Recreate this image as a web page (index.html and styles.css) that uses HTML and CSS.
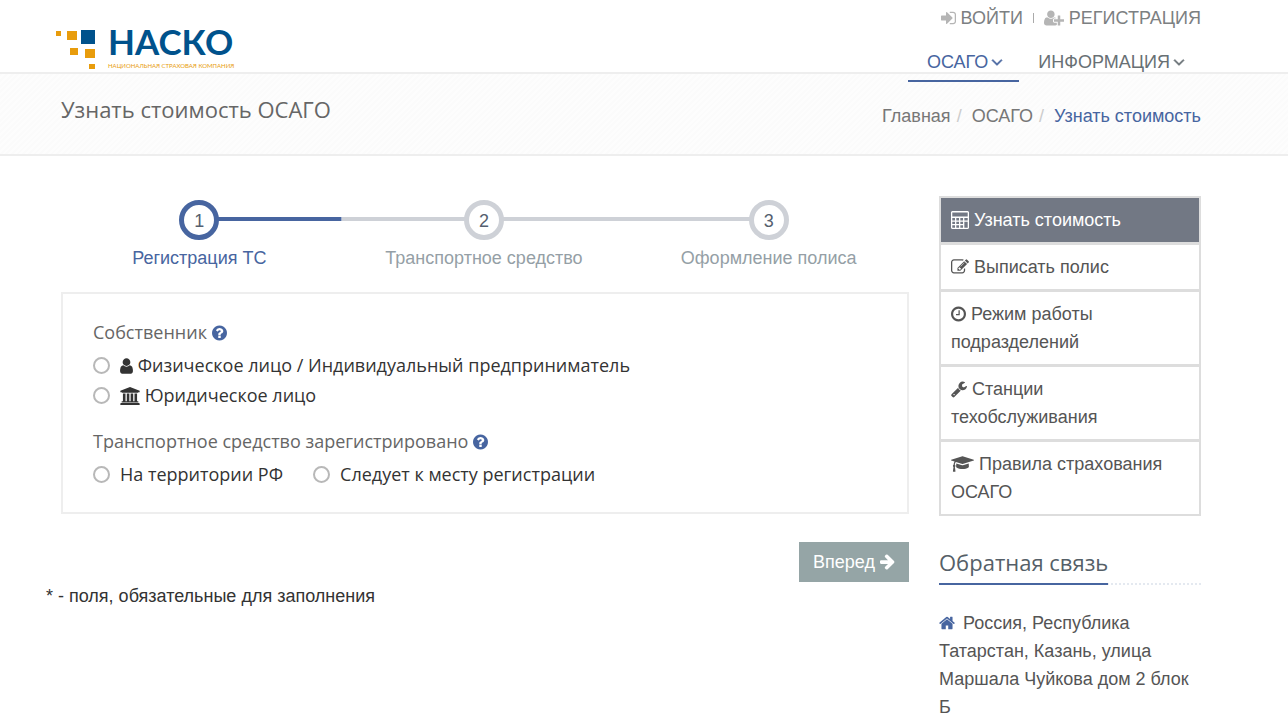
FILE: index.html
```html
<!DOCTYPE html>
<html lang="ru">
<head>
<meta charset="utf-8">
<meta name="viewport" content="width=device-width, initial-scale=1">
<title>Узнать стоимость ОСАГО</title>
<link rel="stylesheet" href="styles.css">
</head>
<body>
<svg class="sprite" aria-hidden="true">
  <symbol id="sign-in" viewBox="128 0 1536 1792"><path d="M1312 896q0 26-19 45l-544 544q-19 19-45 19t-45-19-19-45v-288h-448q-26 0-45-19t-19-45v-384q0-26 19-45t45-19h448v-288q0-26 19-45t45-19 45 19l544 544q19 19 19 45zm352-352v704q0 119-84.500 203.500t-203.500 84.500h-320q-13 0-22.500-9.500t-9.500-22.500q0-4-1-20t-.5-26.500 3-23.500 10-19.500 20.500-6.500h320q66 0 113-47t47-113v-704q0-66-47-113t-113-47h-312l-11.500-1-11.500-3-8-5.500-7-9-2-13.500q0-4-1-20t-.5-26.500 3-23.500 10-19.500 20.500-6.500h320q119 0 203.500 84.500t84.500 203.500z"/></symbol>
  <symbol id="user-plus" viewBox="0 0 2048 1792"><path d="M704 896q-159 0-271.500-112.500t-112.500-271.500 112.500-271.500 271.500-112.500 271.500 112.500 112.500 271.500-112.500 271.500-271.500 112.500zm960 128h352q13 0 22.500 9.500t9.500 22.500v192q0 13-9.500 22.500t-22.500 9.500h-352v352q0 13-9.500 22.500t-22.500 9.500h-192q-13 0-22.500-9.500t-9.500-22.500v-352h-352q-13 0-22.500-9.500t-9.500-22.500v-192q0-13 9.500-22.500t22.500-9.500h352v-352q0-13 9.500-22.500t22.500-9.500h192q13 0 22.500 9.500t9.500 22.500v352zm-736 224q0 52 38 90t90 38h256v238q-68 50-171 50h-874q-121 0-194-69t-73-190q0-53 3.500-103.500t14-109 26.500-108.500 43-97.500 62-81 85.500-53.500 111.500-20q19 0 39 17 79 61 154.500 91.500t164.500 30.500 164.500-30.500 154.500-91.500q20-17 39-17 132 0 217 96h-223q-52 0-90 38t-38 90v192z"/></symbol>
  <symbol id="angle-down" viewBox="320 0 1152 1792"><path stroke="currentColor" stroke-width="60" d="M1395 736q0 13-10 23l-466 466q-10 10-23 10t-23-10l-466-466q-10-10-10-23t10-23l50-50q10-10 23-10t23 10l393 393 393-393q10-10 23-10t23 10l50 50q10 10 10 23z"/></symbol>
  <symbol id="question" viewBox="128 0 1536 1792"><path d="M1024 1376v-192q0-14-9-23t-23-9h-192q-14 0-23 9t-9 23v192q0 14 9 23t23 9h192q14 0 23-9t9-23zm256-672q0-88-55.500-163t-138.500-116-170-41q-243 0-371 213-15 24 8 42l132 100q7 6 19 6 16 0 25-12 53-68 86-92 34-24 86-24 48 0 85.500 26t37.500 59q0 38-20 61t-68 45q-63 28-115.500 86.500t-52.500 125.500v36q0 14 9 23t23 9h192q14 0 23-9t9-23q0-19 21.500-49.500t54.500-49.500q32-18 49-28.500t46-35 44.500-48 28-60.500 12.500-81zm384 192q0 209-103 385.500t-279.500 279.500-385.500 103-385.500-103-279.500-279.500-103-385.500 103-385.500 279.500-279.500 385.500-103 385.500 103 279.500 279.500 103 385.500z"/></symbol>
  <symbol id="user" viewBox="256 0 1280 1792"><path d="M1536 1399q0 109-62.500 187t-150.500 78h-854q-88 0-150.500-78t-62.500-187q0-85 8.500-160.500t31.500-152 58.500-131 94-89 134.500-34.500q131 128 313 128t313-128q76 0 134.500 34.500t94 89 58.500 131 31.500 152 8.500 160.500zm-256-887q0 159-112.500 271.500t-271.500 112.500-271.500-112.500-112.500-271.500 112.500-271.500 271.500-112.500 271.500 112.500 112.500 271.500z"/></symbol>
  <symbol id="university" viewBox="0 0 1920 1792"><path d="M960 0l960 384v128h-128q0 26-20 45t-49 19H197q-28 0-48-19t-21-45H0V384zM256 640h256v768h128V640h256v768h128V640h256v768h128V640h256v768h59q28 0 48 19t21 45v64H128v-64q0-26 21-45t48-19h59zM1851 1600q28 0 48 19t21 45v128H0v-128q0-26 21-45t48-19z"/></symbol>
  <symbol id="calculator" viewBox="0 0 1792 1792"><path fill-rule="evenodd" d="M128 0h1536q52 0 90 38t38 90v1536q0 52-38 90t-90 38H128q-52 0-90-38t-38-90V128q0-52 38-90t90-38zM128 160h1536v384H128zM128 704h272v240H128zM528 704h272v240H528zM928 704h272v240H928zM1328 704h336v240h-336zM128 1060h272v240H128zM528 1060h272v240H528zM928 1060h272v240H928zM128 1416h272v240H128zM528 1416h272v240H528zM928 1416h272v240H928zM1328 1060h336v596h-336z"/></symbol>
  <symbol id="edit" viewBox="0 0 1792 1792"><path d="M888 1184l116-116-152-152-116 116v56h96v96h56zm440-720q-16-16-33 1l-350 350q-17 17-1 33t33-1l350-350q17-17 1-33zm80 594v190q0 119-84.500 203.500t-203.500 84.500h-832q-119 0-203.500-84.500t-84.500-203.500v-832q0-119 84.500-203.500t203.500-84.500h832q63 0 117 25 15 7 18 23 3 17-9 29l-49 49q-14 14-32 8-23-6-45-6h-832q-66 0-113 47t-47 113v832q0 66 47 113t113 47h832q66 0 113-47t47-113v-126q0-13 9-22l64-64q15-15 35-7t20 29zm-96-738l288 288-672 672h-288v-288zm444 132l-92 92-288-288 92-92q28-28 68-28t68 28l152 152q28 28 28 68t-28 68z"/></symbol>
  <symbol id="clock" viewBox="128 0 1536 1792"><path d="M1024 544v448q0 14-9 23t-23 9h-320q-14 0-23-9t-9-23v-64q0-14 9-23t23-9h224v-352q0-14 9-23t23-9h64q14 0 23 9t9 23zm416 352q0-148-73-273t-198-198-273-73-273 73-198 198-73 273 73 273 198 198 273 73 273-73 198-198 73-273zm224 0q0 209-103 385.500t-279.500 279.500-385.500 103-385.500-103-279.500-279.500-103-385.500 103-385.500 279.500-279.500 385.500-103 385.500 103 279.500 279.500 103 385.500z"/></symbol>
  <symbol id="wrench" viewBox="64 0 1664 1792"><path d="M448 1472q0-26-19-45t-45-19-45 19-19 45 19 45 45 19 45-19 19-45zm644-420l-682 682q-37 37-90 37-52 0-91-37l-106-108q-38-36-38-90 0-53 38-91l681-681q39 98 114.500 173.500t173.500 114.500zm634-435q0 39-23 106-47 134-164.500 217.500t-258.500 83.500q-185 0-316.500-131.500t-131.500-316.500 131.500-316.500 316.500-131.500q58 0 121.500 16.500t107.500 46.500q16 11 16 28t-16 28l-293 169v224l193 107q5-3 79-48.500t135.500-81 70.500-35.500q15 0 23.500 10t8.500 25z"/></symbol>
  <symbol id="graduation" viewBox="0 0 2304 1792"><path d="M1774 836l18 316q4 69-82 128t-235 93.500-323 34.500-323-34.500-235-93.500-82-128l18-316 574 181q22 7 48 7t48-7zm530-324q0 23-22 31l-1120 352q-4 1-10 1t-10-1l-652-206q-43 34-71 111.500t-34 178.500q63 36 63 109 0 69-58 107l58 433q2 14-8 25-9 11-24 11h-192q-15 0-24-11-10-11-8-25l58-433q-58-38-58-107 0-73 65-111 11-207 98-330l-333-104q-22-8-22-31t22-31l1120-352q4-1 10-1t10 1l1120 352q22 8 22 31z"/></symbol>
  <symbol id="arrow-right" viewBox="0 64 1536 1792"><path d="M1472 960q0 54-37 91l-651 651q-39 37-91 37-51 0-90-37l-75-75q-38-38-38-91t38-91l293-293h-704q-52 0-84.500-37.500t-32.500-90.500v-128q0-53 32.500-90.500t84.500-37.500h704l-293-294q-38-36-38-90t38-90l75-75q38-38 90-38 53 0 91 38l651 651q37 35 37 90z"/></symbol>
  <symbol id="home" viewBox="0 0 1664 1792"><path d="M1408 992v480q0 26-19 45t-45 19h-384v-384h-256v384h-384q-26 0-45-19t-19-45v-480q0-1 .5-3t.5-3l575-474 575 474q1 2 1 6zm223-69l-62 74q-8 9-21 11h-3q-13 0-21-7l-692-577-692 577q-12 8-24 7-13-2-21-11l-62-74q-8-10-7-23.500t11-21.500l719-599q32-26 76-26t76 26l244 204v-195q0-14 9-23t23-9h192q14 0 23 9t9 23v408l219 182q10 8 11 21.500t-7 23.500z"/></symbol>
</svg>

<header class="header">
  <div class="container header-row">
    <a class="logo" href="#">
      <svg class="logo-mark" viewBox="0 0 40 40" aria-hidden="true">
        <path fill="#e89c0c" d="M0 1h5v5H0zM11 1h10v9H11zM14 18h8v7h-8zM29 19h10v9H29zM33 34h6v5h-6z"/>
        <path fill="#00528c" d="M25 0h14v14H25z"/>
      </svg>
      <span class="logo-text">
        <span class="logo-name">НАСКО</span>
        <span class="logo-sub">НАЦИОНАЛЬНАЯ СТРАХОВАЯ КОМПАНИЯ</span>
      </span>
    </a>
    <div class="header-menus">
      <div class="account">
        <a class="account-link" href="#"><svg class="icon w15"><use href="#sign-in"/></svg>ВОЙТИ</a>
        <span class="account-divider"></span>
        <a class="account-link" href="#"><svg class="icon w20"><use href="#user-plus"/></svg>РЕГИСТРАЦИЯ</a>
      </div>
      <nav class="nav">
        <a class="nav-link active" href="#">ОСАГО<svg class="icon w12"><use href="#angle-down"/></svg></a>
        <a class="nav-link" href="#">ИНФОРМАЦИЯ<svg class="icon w12"><use href="#angle-down"/></svg></a>
      </nav>
    </div>
  </div>
</header>

<section class="band">
  <div class="container band-row">
    <h1 class="page-title">Узнать стоимость ОСАГО</h1>
    <ol class="crumbs">
      <li><a href="#">Главная</a></li>
      <li><a href="#">ОСАГО</a></li>
      <li class="current">Узнать стоимость</li>
    </ol>
  </div>
</section>

<div class="container layout">
  <main class="main">
    <ol class="steps">
      <li class="step current"><span class="step-dot">1</span><span>Регистрация ТС</span></li>
      <li class="step"><span class="step-dot">2</span><span>Транспортное средство</span></li>
      <li class="step"><span class="step-dot">3</span><span>Оформление полиса</span></li>
    </ol>
    <form class="form">
      <div class="panel">
        <fieldset class="group">
          <legend class="group-title">Собственник <svg class="icon w15 help"><use href="#question"/></svg></legend>
          <div class="options stacked">
            <label class="option"><input type="radio" name="owner"><span><svg class="icon w13"><use href="#user"/></svg> Физическое лицо / Индивидуальный предприниматель</span></label>
            <label class="option"><input type="radio" name="owner"><span><svg class="icon w20"><use href="#university"/></svg> Юридическое лицо</span></label>
          </div>
        </fieldset>
        <fieldset class="group">
          <legend class="group-title">Транспортное средство зарегистрировано <svg class="icon w15 help"><use href="#question"/></svg></legend>
          <div class="options">
            <label class="option"><input type="radio" name="place"><span>На территории РФ</span></label>
            <label class="option"><input type="radio" name="place"><span>Следует к месту регистрации</span></label>
          </div>
        </fieldset>
      </div>
      <button class="next" type="button">Вперед <svg class="icon w15"><use href="#arrow-right"/></svg></button>
    </form>
    <p class="note">* - поля, обязательные для заполнения</p>
  </main>

  <aside class="side">
    <ul class="side-menu">
      <li><a class="active" href="#"><svg class="icon w18"><use href="#calculator"/></svg> Узнать стоимость</a></li>
      <li><a href="#"><svg class="icon w18"><use href="#edit"/></svg> Выписать полис</a></li>
      <li><a href="#"><svg class="icon w15"><use href="#clock"/></svg> Режим работы подразделений</a></li>
      <li><a href="#"><svg class="icon w16"><use href="#wrench"/></svg> Станции техобслуживания</a></li>
      <li><a href="#"><svg class="icon w23"><use href="#graduation"/></svg> Правила страхования ОСАГО</a></li>
    </ul>
    <div class="headline"><h2>Обратная связь</h2></div>
    <address class="address"><svg class="icon w16"><use href="#home"/></svg>Россия, Республика Татарстан, Казань, улица Маршала Чуйкова дом 2 блок Б</address>
  </aside>
</div>
</body>
</html>
```
FILE: styles.css
```css
* { box-sizing: border-box; }

body {
  margin: 0;
  background: #fff;
  color: #555;
  font-family: "Liberation Sans", Arial, sans-serif;
  font-size: 18px;
  line-height: 28px;
}

a { color: inherit; text-decoration: none; }
ul, ol { list-style: none; margin: 0; padding: 0; }

.sprite { display: none; }

.icon {
  height: 18px;
  fill: currentColor;
  vertical-align: -3px;
}
.w12 { width: 12px; }
.w13 { width: 13px; }
.w15 { width: 15px; }
.w16 { width: 16px; }
.w18 { width: 18px; }
.w20 { width: 20px; }
.w23 { width: 23px; }

.container {
  max-width: 1288px;
  padding: 0 87px 0 61px;
  margin: 0 auto;
}

/* Header */
.header {
  position: relative;
  z-index: 1;
  border-bottom: 2px solid #eee;
}
.header-row {
  display: flex;
  justify-content: space-between;
  padding-left: 56px;
}
.logo {
  display: flex;
  align-items: flex-end;
  gap: 12px;
  padding-bottom: 2px;
}
.logo-mark { width: 40px; height: 40px; }
.logo-text { display: flex; flex-direction: column; }
.logo-name {
  color: #00528c;
  font: bold 35px/42px Lato, "Open Sans", sans-serif;
}
.logo-sub {
  color: #e89c0c;
  font: 6px/8px Lato, "Open Sans", sans-serif;
}
.header-menus {
  display: flex;
  flex-direction: column;
  align-items: flex-end;
  gap: 12px;
  padding-top: 4px;
  margin-bottom: -10px;
}
.account {
  display: flex;
  align-items: center;
  gap: 10px;
  color: #7c8082;
}
.account-link { display: flex; align-items: center; gap: 5px; }
.account-link .icon { fill: #b5b5b5; }
.account-divider { width: 1px; height: 10px; background: #aaa; }
.nav { display: flex; color: #687074; }
.nav-link {
  display: flex;
  align-items: center;
  gap: 3px;
  padding: 4px 16px 4px 19px;
  border-bottom: 2px solid transparent;
}
.nav-link.active { color: #4765a0; border-color: #4765a0; }

/* Title band */
.band {
  border-bottom: 2px solid #eee;
  background: repeating-linear-gradient(135deg, #fbfbfb 0 2px, #fdfdfd 2px 4px);
}
.band-row {
  display: flex;
  justify-content: space-between;
  min-height: 80px;
}
.page-title {
  margin: 0;
  padding-top: 20px;
  color: #666;
  font: 22px/30px "Open Sans", sans-serif;
}
.crumbs { display: flex; padding-top: 28px; color: #777; }
.crumbs li + li::before {
  content: "/";
  padding: 0 10px 0 6px;
  color: #ccc;
}
.crumbs .current { color: #4765a0; }

/* Columns */
.layout {
  display: grid;
  grid-template-columns: minmax(0, 1fr) 262px;
  gap: 30px;
  padding-top: 40px;
}

/* Progress */
.steps {
  display: grid;
  grid-template-columns: repeat(3, 1fr);
  padding: 4px 0 20px;
  margin: 0 -2px 0 -4px;
}
.step {
  display: flex;
  flex-direction: column;
  align-items: center;
  gap: 4px;
  color: #959fa6;
  background: linear-gradient(#ced1d7, #ced1d7) 0 17px / 100% 4px no-repeat;
}
.step:first-child {
  background-image: linear-gradient(#4765a0, #4765a0);
  background-position: 100% 17px;
  background-size: 50% 4px;
}
.step:last-child { background-size: 50% 4px; }
.step.current { color: #4765a0; }
.step-dot {
  width: 40px;
  height: 40px;
  padding-top: 2px;
  border: 5px solid #ced1d7;
  border-radius: 50%;
  background: #fff;
  color: #555f6f;
  text-align: center;
}
.step.current .step-dot { border-color: #4765a0; }

/* Form */
.form {
  display: flex;
  flex-direction: column;
  align-items: flex-end;
  gap: 28px;
}
.panel {
  align-self: stretch;
  display: flex;
  flex-direction: column;
  gap: 16px;
  padding: 23px 30px;
  border: 2px solid #eee;
  color: #333;
  font: 18px/30px "Open Sans", sans-serif;
}
.group { min-width: 0; margin: 0; padding: 0; border: 0; }
.group-title { padding: 0; color: #666; }
.help { fill: #4765a0; }
.options { display: flex; gap: 0 30px; padding-top: 3px; }
.options.stacked { flex-direction: column; }
.option { display: flex; align-items: center; gap: 10px; }
.option input {
  appearance: none;
  width: 17px;
  height: 17px;
  margin: 0;
  border: 2px solid #b8b8b8;
  border-radius: 50%;
  background: #fff;
}
.option input:checked { border-color: #4765a0; background: #4765a0; }
.next {
  height: 40px;
  padding: 0 14px;
  border: 0;
  background: #95a5a6;
  color: #fff;
  font: 18px/40px "Liberation Sans", Arial, sans-serif;
}
.note { margin: 0 0 0 -15px; color: #333; }

/* Sidebar */
.side-menu {
  display: flex;
  flex-direction: column;
  gap: 3px;
  border: 2px solid #ddd;
  background: #ddd;
}
.side-menu a {
  display: block;
  padding: 8px 10px;
  background: #fff;
}
.side-menu a.active { background: #727884; color: #fff; }
.headline {
  display: flex;
  margin: 28px 0 24px;
  border-bottom: 2px dotted #e4e9f0;
}
.headline h2 {
  margin: 0 0 -2px;
  padding-bottom: 3px;
  border-bottom: 2px solid #4765a0;
  color: #555f68;
  font: 22px/36px "Open Sans", sans-serif;
}
.address { font-style: normal; }
.address .icon { margin-right: 8px; fill: #4765a0; }
```
